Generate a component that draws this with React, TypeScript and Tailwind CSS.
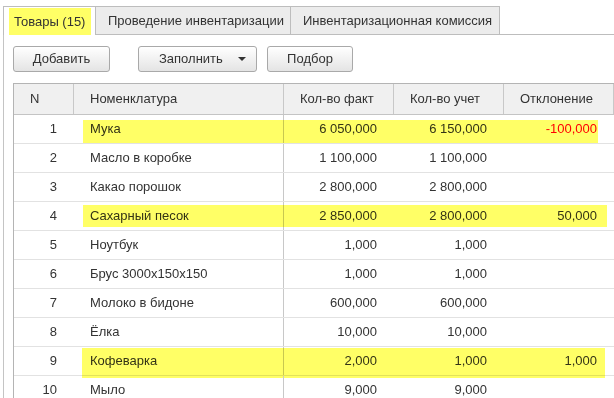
import React from 'react';

type Row = {
  n: number;
  name: string;
  fact: string;
  acc: string;
  diff?: string;
  neg?: boolean;
  mark?: { left: number; top: number; width: number; height: number };
};

const rows: Row[] = [
  { n: 1, name: 'Мука', fact: '6 050,000', acc: '6 150,000', diff: '-100,000', neg: true, mark: { left: 69, top: 5, width: 515, height: 23 } },
  { n: 2, name: 'Масло в коробке', fact: '1 100,000', acc: '1 100,000' },
  { n: 3, name: 'Какао порошок', fact: '2 800,000', acc: '2 800,000' },
  { n: 4, name: 'Сахарный песок', fact: '2 850,000', acc: '2 800,000', diff: '50,000', mark: { left: 69, top: 3, width: 524, height: 22 } },
  { n: 5, name: 'Ноутбук', fact: '1,000', acc: '1,000' },
  { n: 6, name: 'Брус 3000х150х150', fact: '1,000', acc: '1,000' },
  { n: 7, name: 'Молоко в бидоне', fact: '600,000', acc: '600,000' },
  { n: 8, name: 'Ёлка', fact: '10,000', acc: '10,000' },
  { n: 9, name: 'Кофеварка', fact: '2,000', acc: '1,000', diff: '1,000', mark: { left: 68, top: 1, width: 523, height: 30 } },
  { n: 10, name: 'Мыло', fact: '9,000', acc: '9,000' },
];

const cols = 'grid grid-cols-[60px_210px_110px_110px_110px]';

function Button({ label, width, menu }: { label: string; width: string; menu?: boolean }) {
  return (
    <button
      className={`${width} flex h-[26px] items-center justify-center rounded-[3px] border border-[#a9a9a9] bg-gradient-to-b from-white to-[#e4e4e4] text-[13px] text-[#333]`}
    >
      {menu ? (
        <span className="flex w-full items-center pl-[20px] pr-[10px]">
          <span className="flex-1 text-left">{label}</span>
          <svg width="8" height="4" viewBox="0 0 8 4">
            <path d="M0 0h8L4 4z" fill="#333" />
          </svg>
        </span>
      ) : (
        label
      )}
    </button>
  );
}

export default function App() {
  return (
    <div className="relative h-[398px] w-[614px] overflow-hidden bg-white font-['Liberation_Sans',Arial,sans-serif] text-[13px] text-[#333]">
      {/* Tabs */}
      <div className="flex pl-[3px] pt-[6px]">
        <div className="h-[29px] w-[93px] border-x border-t border-[#bdbdbd] bg-white pl-[5px] pr-[4px] pt-[1px]">
          <div className="flex h-[27px] items-center bg-[#ffff66] pl-[5px]">Товары (15)</div>
        </div>
        <div className="flex h-[29px] w-[195px] items-center border-b border-r border-t border-[#bdbdbd] bg-[#ececec] pl-[12px]">
          Проведение инвентаризации
        </div>
        <div className="flex h-[29px] w-[209px] items-center border-b border-r border-t border-[#bdbdbd] bg-[#ececec] pl-[12px]">
          Инвентаризационная комиссия
        </div>
        <div className="h-[29px] flex-1 border-b border-[#bdbdbd]" />
      </div>

      {/* Panel */}
      <div className="ml-[3px] h-[400px] border-l border-[#c4c4c4] pl-[9px] pt-[11px]">
        <div className="flex items-center">
          <Button label="Добавить" width="w-[97px]" />
          <div className="ml-[28px]">
            <Button label="Заполнить" width="w-[119px]" menu />
          </div>
          <div className="ml-[10px]">
            <Button label="Подбор" width="w-[86px]" />
          </div>
        </div>

        {/* Table */}
        <div className="mt-[11px] w-[602px] border-l border-t border-[#b4b4b4]">
          <div className={`${cols} h-[31px] border-b border-[#c4c4c4] bg-[#f0f0f0]`}>
            <div className="flex items-center border-r border-[#c8c8c8] pl-[16px]">N</div>
            <div className="flex items-center border-r border-[#c8c8c8] pl-[16px]">Номенклатура</div>
            <div className="flex items-center border-r border-[#c8c8c8] pl-[16px]">Кол-во факт</div>
            <div className="flex items-center border-r border-[#c8c8c8] pl-[16px]">Кол-во учет</div>
            <div className="flex items-center border-r border-[#c8c8c8] pl-[16px]">Отклонение</div>
          </div>
          {rows.map((r) => (
            <div key={r.n} className={`${cols} relative h-[29px] border-b border-[#e2e2e2]`}>
              <div className="flex items-center justify-end pr-[17px]">{r.n}</div>
              <div className="flex items-center border-r border-[#c8c8c8] pl-[16px]">{r.name}</div>
              <div className="flex items-center justify-end pr-[17px]">{r.fact}</div>
              <div className="flex items-center justify-end pr-[17px]">{r.acc}</div>
              <div className={`flex items-center justify-end pr-[17px] ${r.neg ? 'text-[#ff0000]' : ''}`}>{r.diff}</div>
              {r.mark && (
                <div
                  className="pointer-events-none absolute bg-[#ffff66] mix-blend-multiply"
                  style={{ left: r.mark.left, top: r.mark.top, width: r.mark.width, height: r.mark.height }}
                />
              )}
            </div>
          ))}
        </div>
      </div>
    </div>
  );
}
